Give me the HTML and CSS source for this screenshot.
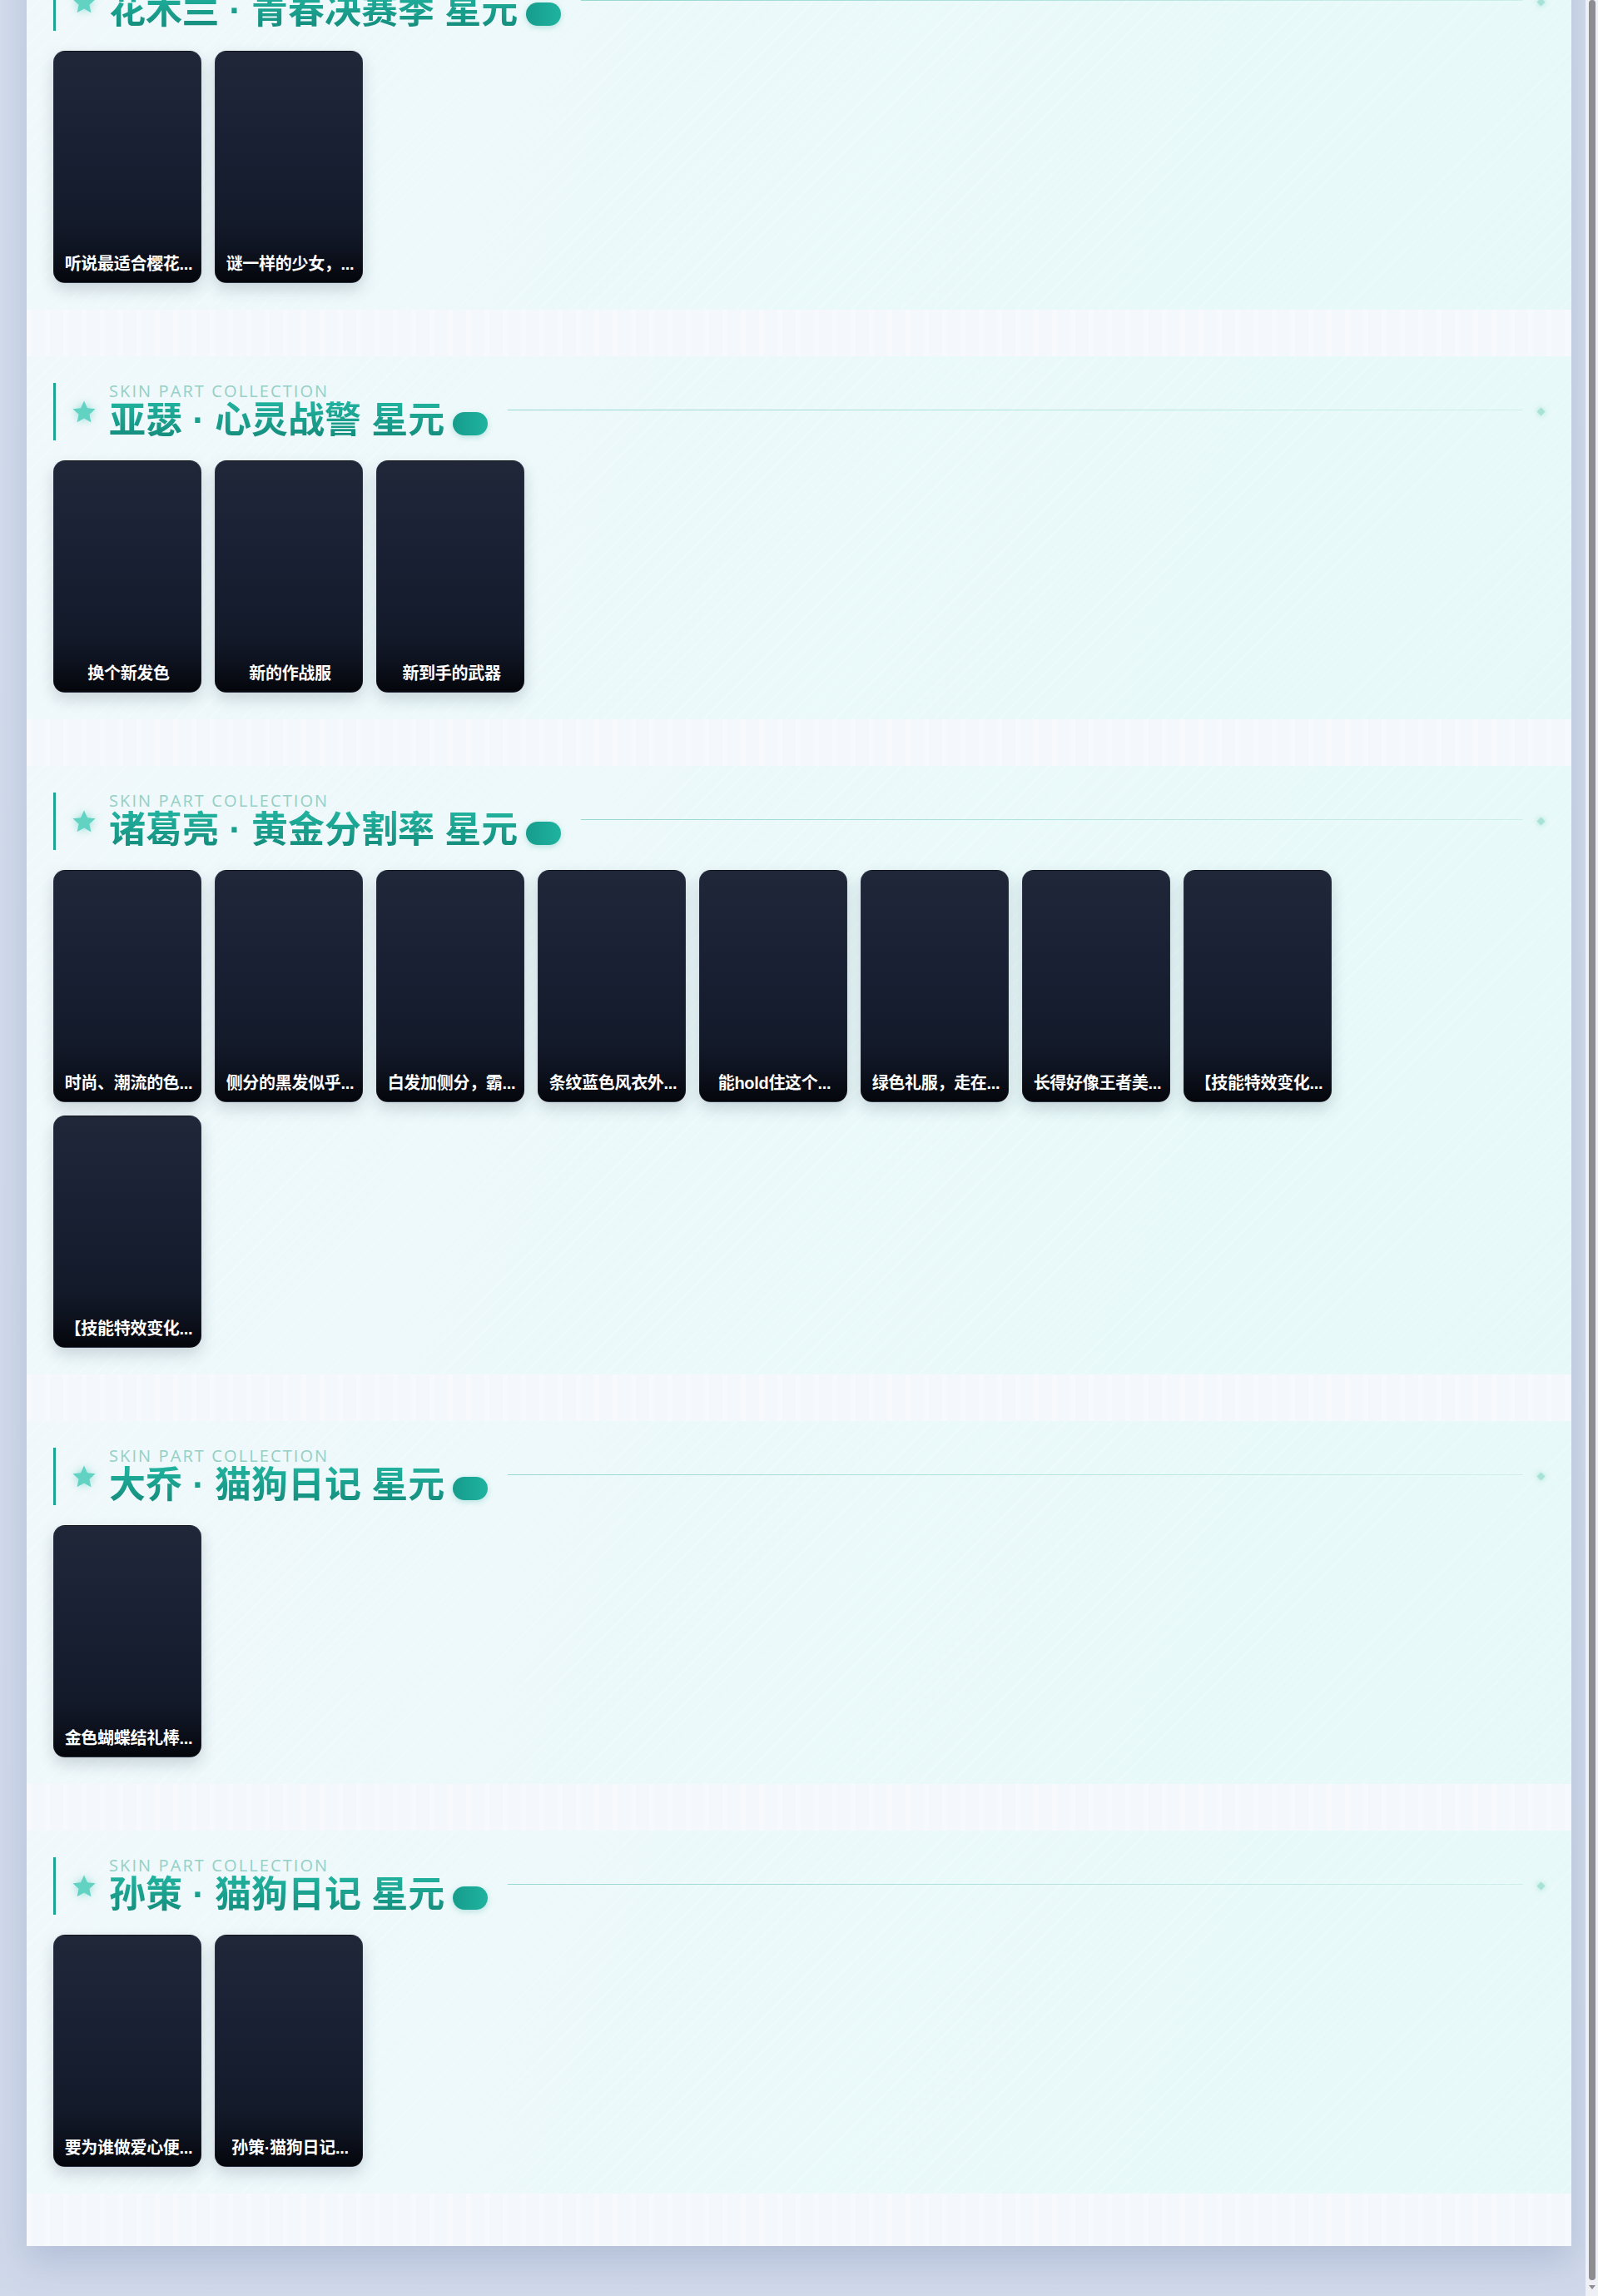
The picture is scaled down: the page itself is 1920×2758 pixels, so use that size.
FILE: index.html
```html
<!DOCTYPE html>
<html>

<head>
    <meta name="viewport" content="width=device-width, initial-scale=1">
    <title>
        skin parts
    </title>
    <link rel="stylesheet" href="styles.css">
</head>

<body>
    <div class="page">
        <div class="board">

            <section class="part">
                <div class="part-head">
                    <svg class="star" viewBox="0 0 24 24"><path d="M12 1.8l3 6.6 7.2.8-5.4 4.9 1.5 7.1L12 17.6l-6.3 3.6 1.5-7.1L1.8 9.2 9 8.4z"/></svg>
                    <div class="part-text">
                        <div class="part-label">SKIN PART COLLECTION</div>
                        <div class="part-title"><span class="title-text">花木兰 · 青春决赛季 星元</span><span class="pill"></span></div>
                    </div>
                    <div class="part-line"></div>
                    <div class="diamond"></div>
                </div>
                <div class="cards">
                    <div class="card"><span class="caption">听说最适合樱花...</span></div>
                    <div class="card"><span class="caption">谜一样的少女，...</span></div>
                </div>
            </section>

            <section class="part">
                <div class="part-head">
                    <svg class="star" viewBox="0 0 24 24"><path d="M12 1.8l3 6.6 7.2.8-5.4 4.9 1.5 7.1L12 17.6l-6.3 3.6 1.5-7.1L1.8 9.2 9 8.4z"/></svg>
                    <div class="part-text">
                        <div class="part-label">SKIN PART COLLECTION</div>
                        <div class="part-title"><span class="title-text">亚瑟 · 心灵战警 星元</span><span class="pill"></span></div>
                    </div>
                    <div class="part-line"></div>
                    <div class="diamond"></div>
                </div>
                <div class="cards">
                    <div class="card"><span class="caption">换个新发色</span></div>
                    <div class="card"><span class="caption">新的作战服</span></div>
                    <div class="card"><span class="caption">新到手的武器</span></div>
                </div>
            </section>

            <section class="part">
                <div class="part-head">
                    <svg class="star" viewBox="0 0 24 24"><path d="M12 1.8l3 6.6 7.2.8-5.4 4.9 1.5 7.1L12 17.6l-6.3 3.6 1.5-7.1L1.8 9.2 9 8.4z"/></svg>
                    <div class="part-text">
                        <div class="part-label">SKIN PART COLLECTION</div>
                        <div class="part-title"><span class="title-text">诸葛亮 · 黄金分割率 星元</span><span class="pill"></span></div>
                    </div>
                    <div class="part-line"></div>
                    <div class="diamond"></div>
                </div>
                <div class="cards">
                    <div class="card"><span class="caption">时尚、潮流的色...</span></div>
                    <div class="card"><span class="caption">侧分的黑发似乎...</span></div>
                    <div class="card"><span class="caption">白发加侧分，霸...</span></div>
                    <div class="card"><span class="caption">条纹蓝色风衣外...</span></div>
                    <div class="card"><span class="caption">能hold住这个...</span></div>
                    <div class="card"><span class="caption">绿色礼服，走在...</span></div>
                    <div class="card"><span class="caption">长得好像王者美...</span></div>
                    <div class="card"><span class="caption">【技能特效变化...</span></div>
                    <div class="card"><span class="caption">【技能特效变化...</span></div>
                </div>
            </section>

            <section class="part">
                <div class="part-head">
                    <svg class="star" viewBox="0 0 24 24"><path d="M12 1.8l3 6.6 7.2.8-5.4 4.9 1.5 7.1L12 17.6l-6.3 3.6 1.5-7.1L1.8 9.2 9 8.4z"/></svg>
                    <div class="part-text">
                        <div class="part-label">SKIN PART COLLECTION</div>
                        <div class="part-title"><span class="title-text">大乔 · 猫狗日记 星元</span><span class="pill"></span></div>
                    </div>
                    <div class="part-line"></div>
                    <div class="diamond"></div>
                </div>
                <div class="cards">
                    <div class="card"><span class="caption">金色蝴蝶结礼棒...</span></div>
                </div>
            </section>

            <section class="part">
                <div class="part-head">
                    <svg class="star" viewBox="0 0 24 24"><path d="M12 1.8l3 6.6 7.2.8-5.4 4.9 1.5 7.1L12 17.6l-6.3 3.6 1.5-7.1L1.8 9.2 9 8.4z"/></svg>
                    <div class="part-text">
                        <div class="part-label">SKIN PART COLLECTION</div>
                        <div class="part-title"><span class="title-text">孙策 · 猫狗日记 星元</span><span class="pill"></span></div>
                    </div>
                    <div class="part-line"></div>
                    <div class="diamond"></div>
                </div>
                <div class="cards">
                    <div class="card"><span class="caption">要为谁做爱心便...</span></div>
                    <div class="card"><span class="caption">孙策·猫狗日记...</span></div>
                </div>
            </section>

        </div>
    </div>

    <div class="scrollbar">
        <div class="thumb"></div>
        <div class="arrow"></div>
    </div>
</body>

</html>
```

FILE: styles.css
```css
html,
body {
    margin: 0;
    height: 100%;
}

body {
    display: flex;
    overflow: hidden;
    background: linear-gradient(180deg, #d3dcec 0%, #d0d9ea 100%);
    font-family: "Liberation Sans", "Noto Sans CJK SC", sans-serif;
}

.page {
    flex: 1;
    padding: 0 17px 0 32px;
}

.board {
    margin-top: -64px;
    padding-bottom: 63px;
    display: flex;
    flex-direction: column;
    gap: 56px;
    background-color: #f4f7fc;
    background-image: repeating-linear-gradient(90deg, rgba(255, 255, 255, .3) 0 6px, transparent 6px 22px);
    box-shadow: 0 18px 40px rgba(120, 140, 180, .35);
}

/* one hero's part group */
.part {
    padding: 32px;
    background-color: #ecf9fa;
    background-image:
        repeating-linear-gradient(135deg, rgba(255, 255, 255, .18) 0 2px, transparent 2px 14px),
        linear-gradient(110deg, #f0f8fb 0%, #eaf9fa 55%, #e6f9f8 100%);
}

.part-head {
    display: flex;
    align-items: center;
    height: 69px;
    border-left: 3px solid #1ba592;
    padding-left: 18px;
    margin-bottom: 24px;
}

.star {
    width: 32px;
    height: 32px;
    margin-right: 14px;
    fill: #62d2c2;
    filter: drop-shadow(0 0 5px rgba(60, 200, 180, .5));
}

.part-text {
    display: flex;
    flex-direction: column;
}

.part-label {
    font-family: "Open Sans", sans-serif;
    font-size: 20px;
    line-height: 20px;
    letter-spacing: 2.1px;
    color: #94d0c5;
}

.part-title {
    display: flex;
    align-items: center;
    height: 49px;
}

.title-text {
    font-size: 44px;
    font-weight: 700;
    line-height: 49px;
    white-space: nowrap;
    background: linear-gradient(180deg, #22b5a1 0%, #148a7a 100%);
    -webkit-background-clip: text;
    background-clip: text;
    color: transparent;
}

.pill {
    width: 42px;
    height: 28px;
    margin: 8px 0 0 10px;
    border-radius: 14px;
    background: linear-gradient(90deg, #169c8c, #1fb3a0);
    box-shadow: 0 2px 6px rgba(20, 160, 140, .25);
}

.part-line {
    flex: 1;
    height: 1px;
    margin: 0 18px 4px 24px;
    background: linear-gradient(90deg, rgba(26, 165, 146, .4), rgba(26, 165, 146, .12));
}

.diamond {
    width: 7px;
    height: 7px;
    margin-right: 1px;
    transform: rotate(45deg);
    background: #a6e2d6;
    box-shadow: 0 0 6px rgba(120, 210, 195, .6);
}

.cards {
    display: grid;
    grid-template-columns: repeat(8, 178px);
    gap: 16px;
}

.card {
    height: 279px;
    box-sizing: border-box;
    display: flex;
    align-items: flex-end;
    justify-content: center;
    border-radius: 14px;
    border: 1px solid rgba(255, 255, 255, .06);
    background: linear-gradient(180deg, #1f2739 0%, #192033 40%, #131a2a 75%, #0e1320 86%, #04060b 100%);
    box-shadow: 0 8px 18px rgba(30, 50, 70, .18);
    overflow: hidden;
}

.caption {
    display: block;
    width: 100%;
    box-sizing: border-box;
    padding: 0 6px 8px 9px;
    font-size: 20px;
    font-weight: 700;
    line-height: 28px;
    letter-spacing: -.3px;
    color: #fff;
    text-align: center;
    white-space: nowrap;
    overflow: hidden;
    text-overflow: ellipsis;
}

/* page scroll track on the right edge */
.scrollbar {
    width: 15px;
    display: flex;
    flex-direction: column;
    align-items: center;
    background: #eef0f5;
}

.thumb {
    flex: 1;
    width: 8px;
    border-radius: 4px;
    background: #8c8c91;
    margin-bottom: 6px;
}

.arrow {
    width: 0;
    height: 0;
    border-left: 4px solid transparent;
    border-right: 4px solid transparent;
    border-top: 5px solid #8c8c91;
    margin-bottom: 8px;
}
```
